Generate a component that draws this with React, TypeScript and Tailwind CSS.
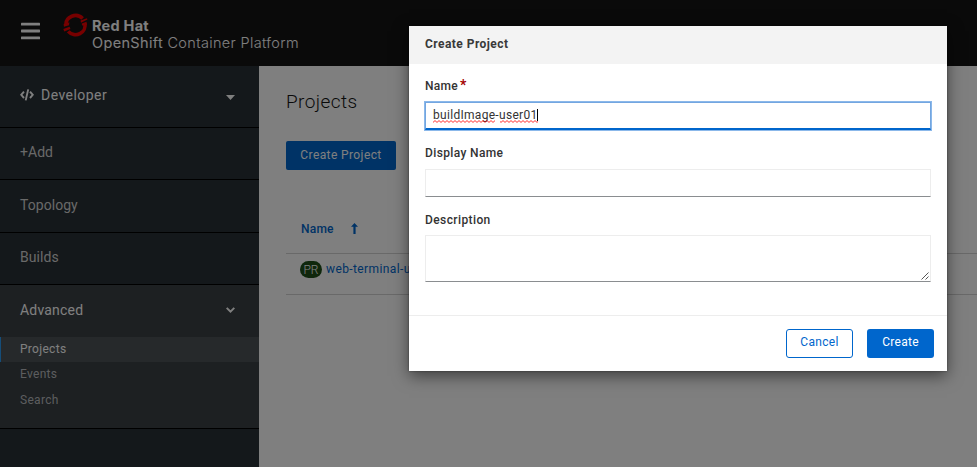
import React from "react";

function NavItem({ label }: { label: string }) {
  return (
    <li className="flex h-[52.5px] items-center border-b border-black pb-px pl-5 text-[14px] tracking-[0.05px] text-[#d2d2d2]">
      {label}
    </li>
  );
}

function Masthead() {
  return (
    <header className="flex h-[66px] shrink-0 items-start bg-[#151515] text-white">
      <svg className="ml-[21px] mt-[22px] h-[19px] w-[19px]" viewBox="0 0 19 19" fill="currentColor">
        <rect y="0.7" width="19" height="2.8" rx="0.6" />
        <rect y="7.6" width="19" height="2.8" rx="0.6" />
        <rect y="14.5" width="19" height="2.8" rx="0.6" />
      </svg>
      <svg className="ml-[23px] mt-[13px] h-[24px] w-[25px]" viewBox="0 0 25 24" fill="none">
        <path d="M2.9 12.2A9.6 9.2 0 0 1 19.6 5.6" stroke="#ee0000" strokeWidth="3.6" />
        <path d="M21.8 10.2A9.6 9.2 0 0 1 5.2 18.4" stroke="#ee0000" strokeWidth="3.6" />
        <path d="M17.6 7.5L24 5.2L24.4 6.6L18 9.8ZM18.8 10.5L23.5 8.7L23.9 12L19 12.4ZM0.6 11.3L6.4 9.2L6 12.2L1 13.7ZM0.3 16L6.6 13.8L7.4 16L1.3 18.6Z" fill="#ee0000" />
      </svg>
      <div className="ml-[4px] mt-[17px] whitespace-nowrap font-[Inter,sans-serif] leading-[17px]">
        <div className="text-[14.5px] font-bold tracking-[0.25px]">Red Hat</div>
        <div className="text-[14.5px] tracking-[0.34px]">
          OpenShift <span className="font-light">Container Platform</span>
        </div>
      </div>
    </header>
  );
}

function Sidebar() {
  return (
    <nav className="w-[259px] shrink-0 bg-[#283036]">
      <div className="flex h-[61.5px] items-center border-b border-black pb-[3px] pl-5 pr-6 text-white">
        <svg className="h-[12px] w-[14px]" viewBox="0 0 14 12" fill="none" stroke="currentColor" strokeWidth="1.9">
          <path d="M4 2.6L1.2 5.8L4 9M10 2.6L12.8 5.8L10 9M8.2 0.4L5.7 11.4" />
        </svg>
        <span className="ml-[7px] pt-[2px] text-[14px] tracking-[0.45px]">Developer</span>
        <svg className="ml-auto mt-[5px] h-[5px] w-[9px]" viewBox="0 0 9 5" fill="currentColor">
          <path d="M0 0H9L4.5 5Z" />
        </svg>
      </div>
      <ul>
        <NavItem label="+Add" />
        <NavItem label="Topology" />
        <NavItem label="Builds" />
      </ul>
      <div className="h-[144px] border-b border-black bg-[#3a4044]">
        <div className="flex h-[52px] items-center pb-[2px] pl-5 pr-6 text-[14px] tracking-[0.2px] text-white">
          Advanced
          <svg className="ml-auto h-[6px] w-[9px]" viewBox="0 0 9 6" fill="none" stroke="currentColor" strokeWidth="2">
            <path d="M0.7 0.9L4.5 4.6L8.3 0.9" />
          </svg>
        </div>
        <ul className="text-[12px] tracking-[0.3px] text-[#b8bbbe]">
          <li className="flex h-[25px] items-center border-l border-[#2b9af3] bg-[#4c5256] pb-[2px] pl-[19px] text-white">Projects</li>
          <li className="flex h-[26px] items-center pb-[2px] pl-5">Events</li>
          <li className="flex h-[26px] items-center pb-[2px] pl-5">Search</li>
        </ul>
      </div>
    </nav>
  );
}

function ProjectsPage() {
  return (
    <main className="min-w-0 flex-1 bg-white pl-[27px] text-[#151515]">
      <h1 className="mt-[23px] h-[26px] text-[19px] font-light leading-[26px] tracking-[0.4px]">Projects</h1>
      <button className="mt-[26px] h-[29px] w-[110px] rounded-[2px] bg-[#0066cc] pb-[2px] text-[12px] tracking-[0.4px] text-white">
        Create Project
      </button>
      <div className="mt-[34px] flex h-[50px] items-center border-b border-[#d2d2d2] pl-[15px] text-[12px] font-medium text-[#0066cc]">
        <span className="tracking-[0.2px]">Name</span>
        <svg className="ml-[17px] h-[11px] w-[7px]" viewBox="0 0 7 11" fill="currentColor">
          <path d="M3.5 0L7 3.8H4.6V11H2.4V3.8H0Z" />
        </svg>
      </div>
      <div className="flex h-[41px] items-center overflow-hidden whitespace-nowrap border-b border-[#d2d2d2] pb-[9px] pl-[14px] text-[12px] text-[#0066cc]">
        <span className="flex h-[17px] w-[22px] items-center justify-center rounded-full bg-[#1e4f18] font-light text-white">PR</span>
        <span className="ml-1 pb-[2px] tracking-[0.4px]">web-terminal-user01</span>
      </div>
    </main>
  );
}

function ProjectDialog() {
  return (
    <div className="absolute left-[409px] top-[26px] flex h-[345px] w-[538px] flex-col bg-white text-[12px] text-[#333] shadow-[0_5px_15px_rgba(0,0,0,0.5),0_0_2px_rgba(0,0,0,0.4)]">
      <h2 className="flex h-[38px] items-center bg-[#f3f3f3] pb-[2px] pl-4 font-bold tracking-[0.45px] text-[#393939]">Create Project</h2>
      <div className="flex flex-1 flex-col px-4">
        <label className="mt-[13px] h-4 font-medium leading-4 tracking-[0.25px]">
          Name<span className="ml-[2px] text-[14px] font-bold text-[#a30000]">*</span>
        </label>
        <div className="mt-[9px] flex h-[28px] items-center border border-b-2 border-[#73a6e0] border-b-[#0066cc] pb-[2px] pl-[7px] shadow-[0_0_0_1px_#8bb8ea]">
          <span className="relative tracking-[0.3px]">
            buildImage-user01
            <svg className="absolute left-0 top-[14px] h-[3px] w-full text-[#f00]" fill="none" stroke="currentColor" strokeWidth="0.8">
              <defs>
                <pattern id="squiggle" width="4" height="3" patternUnits="userSpaceOnUse">
                  <path d="M0 2.4L2 0.6L4 2.4" />
                </pattern>
              </defs>
              <rect width="62" height="3" fill="url(#squiggle)" stroke="none" />
              <rect x="67" width="38" height="3" fill="url(#squiggle)" stroke="none" />
            </svg>
          </span>
          <span className="-ml-px h-[12px] w-px bg-black" />
        </div>
        <label className="mt-[15px] h-4 font-medium leading-4 tracking-[0.37px]">Display Name</label>
        <div className="mt-2 h-[28px] border border-[#ededed] border-b-[#8a8d90]" />
        <label className="mt-[15px] h-4 font-medium leading-4 tracking-[0.4px]">Description</label>
        <div className="mt-[7px] flex h-[47px] items-end justify-end border border-[#ededed] border-b-[#8a8d90]">
          <svg className="mb-px mr-px h-[8px] w-[8px]" viewBox="0 0 8 8" stroke="#444" strokeWidth="0.9">
            <path d="M0.5 7.5L7.5 0.5M4.5 7.5L7.5 4.5" />
          </svg>
        </div>
      </div>
      <div className="flex h-[56px] items-start justify-end gap-[14px] border-t border-[#ededed] pr-[13px] pt-[13px] tracking-[0.3px]">
        <button className="h-[29px] w-[67px] rounded-[3px] border border-[#0066cc] pb-[4px] text-[#0066cc]">Cancel</button>
        <button className="h-[29px] w-[67px] rounded-[3px] bg-[#0066cc] pb-[4px] text-white">Create</button>
      </div>
    </div>
  );
}

export default function App() {
  return (
    <div className="relative flex h-[467px] w-[977px] flex-col overflow-hidden font-[Roboto,sans-serif]">
      <Masthead />
      <div className="flex min-h-0 flex-1">
        <Sidebar />
        <ProjectsPage />
      </div>
      <div className="absolute inset-0 bg-black/50" />
      <ProjectDialog />
    </div>
  );
}
